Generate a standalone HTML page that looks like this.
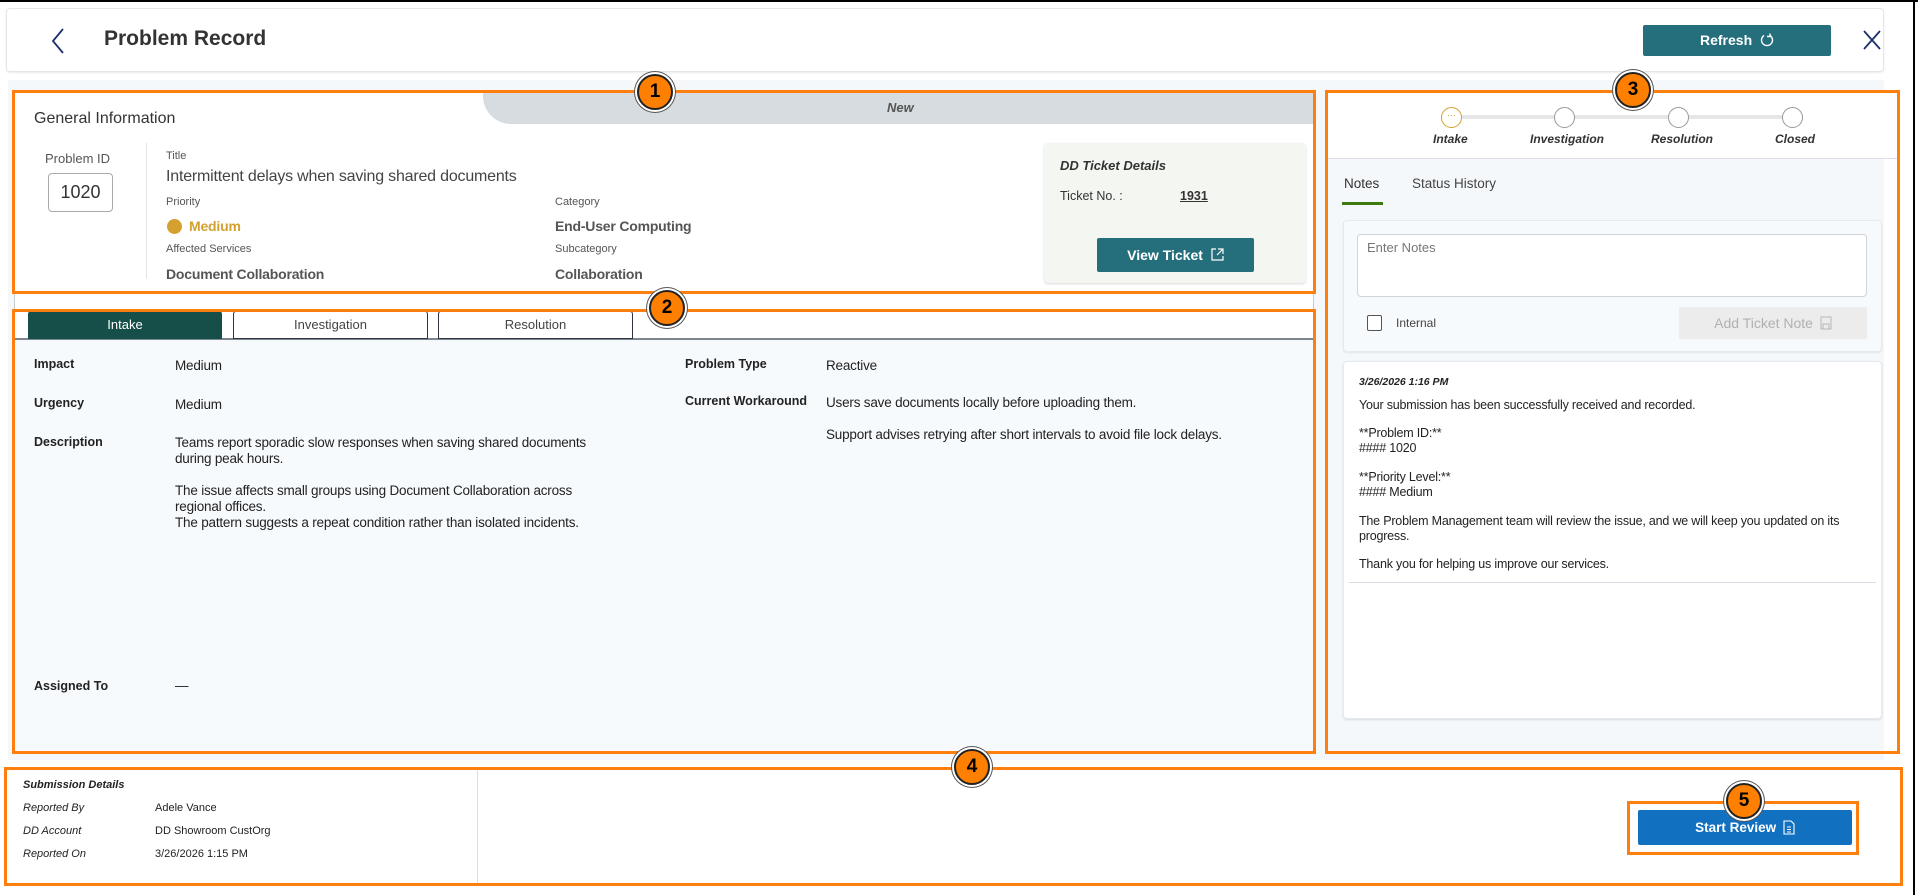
<!DOCTYPE html>
<html><head><meta charset="utf-8"><style>
*{margin:0;padding:0;box-sizing:border-box}
body{width:1918px;height:895px;position:relative;overflow:hidden;background:#fff;font-family:"Liberation Sans",sans-serif;color:#222}
.a{position:absolute;white-space:nowrap}
.ob{position:absolute;border:3px solid #ff7f0e}
.badge{position:absolute;width:36px;height:36px;border-radius:50%;background:#ff7f00;border:2px solid #222;box-shadow:0 0 0 2px #fff,0 0 0 3px #555;font-weight:bold;font-size:19px;line-height:32px;text-align:center;color:#000;z-index:10}
.sm{font-size:11px;color:#555}
.val{font-size:14px;color:#555;font-weight:bold;letter-spacing:-0.2px}
.lab{font-size:12.5px;font-weight:bold;color:#222}
.txt{font-size:13.5px;color:#222;letter-spacing:-0.2px}
.nt{font-size:12.5px;color:#222;letter-spacing:-0.2px}
</style></head><body>
<div class="a" style="left:0;top:0;width:1918px;height:2px;background:#000"></div>
<div class="a" style="left:1913px;top:0;width:2px;height:895px;background:#000"></div>
<!-- header -->
<div class="a" style="left:6px;top:8px;width:1878px;height:64px;border:1px solid #e6e6e6;border-radius:4px;box-shadow:0 1px 2px rgba(0,0,0,.08);background:#fff"></div>
<svg class="a" style="left:50px;top:27px" width="16" height="28"><path d="M13 2 L3 14 L13 26" stroke="#1f2f6b" stroke-width="1.8" fill="none"/></svg>
<div class="a" style="left:104px;top:27px;font-size:21px;font-weight:bold;color:#333">Problem Record</div>
<div class="a" style="left:1643px;top:25px;width:188px;height:31px;background:#256f7d;border-radius:2px;color:#fff;font-weight:bold;font-size:14px;text-align:center;line-height:31px">Refresh <svg width="14" height="14" style="vertical-align:-2px;margin-left:4px"><path d="M10 2.5 A5.5 5.5 0 1 1 4 2.5" stroke="#fff" stroke-width="1.4" fill="none"/><path d="M10 0.5 V3.5 H7" stroke="#fff" stroke-width="1.4" fill="none"/></svg></div>
<svg class="a" style="left:1862px;top:29px" width="20" height="22"><path d="M2 2 L18 20 M18 2 L2 20" stroke="#1f2f6b" stroke-width="1.8"/></svg>
<!-- main bg -->
<div class="a" style="left:8px;top:80px;width:1876px;height:680px;background:#f5f8fb"></div>
<!-- box1 -->
<div class="a" style="left:14px;top:92px;width:1300px;height:199px;background:#fff"></div>
<div class="a" style="left:483px;top:92px;width:831px;height:32px;background:#d6dcdf;border-bottom-left-radius:28px"></div>
<div class="a" style="left:887px;top:100px;font-size:13px;font-style:italic;font-weight:bold;color:#555">New</div>
<div class="a" style="left:34px;top:110px;font-size:16px;color:#333">General Information</div>
<div class="a" style="left:45px;top:151px;font-size:13px;color:#555">Problem ID</div>
<div class="a" style="left:48px;top:173px;width:65px;height:39px;border:1px solid #aaa;border-radius:4px;font-size:18px;text-align:center;line-height:37px;color:#333">1020</div>
<div class="a" style="left:146px;top:143px;width:1px;height:136px;background:#e3e3e3"></div>
<div class="a sm" style="left:166px;top:150px">Title</div>
<div class="a" style="left:166px;top:168px;font-size:16px;color:#444;letter-spacing:-0.2px">Intermittent delays when saving shared documents</div>
<div class="a sm" style="left:166px;top:196px">Priority</div>
<div class="a" style="left:167px;top:219px;width:15px;height:15px;border-radius:50%;background:#d4a030"></div>
<div class="a val" style="left:189px;top:218px;color:#d4a030">Medium</div>
<div class="a sm" style="left:166px;top:243px">Affected Services</div>
<div class="a val" style="left:166px;top:266px">Document Collaboration</div>
<div class="a sm" style="left:555px;top:196px">Category</div>
<div class="a val" style="left:555px;top:218px">End-User Computing</div>
<div class="a sm" style="left:555px;top:243px">Subcategory</div>
<div class="a val" style="left:555px;top:266px">Collaboration</div>
<div class="a" style="left:1044px;top:143px;width:262px;height:140px;background:#f3f6f1;border-radius:4px;box-shadow:0 1px 2px rgba(0,0,0,.15)"></div>
<div class="a" style="left:1060px;top:158px;font-size:13px;font-style:italic;font-weight:bold;color:#333">DD Ticket Details</div>
<div class="a" style="left:1060px;top:189px;font-size:12.5px;color:#333">Ticket No. :</div>
<div class="a" style="left:1180px;top:189px;font-size:12.5px;font-weight:bold;text-decoration:underline;color:#333">1931</div>
<div class="a" style="left:1097px;top:238px;width:157px;height:34px;background:#256f7d;border-radius:2px;color:#fff;font-weight:bold;font-size:14px;text-align:center;line-height:34px">View Ticket <svg width="13" height="13" style="vertical-align:-1px;margin-left:4px"><path d="M5 1H1V12H12V8 M7 1H12V6 M12 1L6 7" stroke="#fff" stroke-width="1.2" fill="none"/></svg></div>
<div class="ob" style="left:12px;top:90px;width:1304px;height:204px"></div>
<div class="a" style="left:14px;top:294px;width:1300px;height:15px;background:#fff;border-left:1px solid #ccc;border-right:1px solid #ccc"></div>
<!-- box2 -->
<div class="a" style="left:14px;top:311px;width:1300px;height:29px;background:#fff;border-bottom:2px solid #7c8790"></div>
<div class="a" style="left:28px;top:311px;width:194px;height:28px;background:#164e4a;border-radius:3px 3px 0 0;color:#fff;font-size:13px;text-align:center;line-height:28px">Intake</div>
<div class="a" style="left:233px;top:311px;width:195px;height:28px;border:1.5px solid #334;border-radius:3px 3px 0 0;color:#444;font-size:13px;text-align:center;line-height:26px">Investigation</div>
<div class="a" style="left:438px;top:311px;width:195px;height:28px;border:1.5px solid #334;border-radius:3px 3px 0 0;color:#444;font-size:13px;text-align:center;line-height:26px">Resolution</div>
<div class="a" style="left:14px;top:341px;width:1300px;height:411px;background:#f7fafd"></div>
<div class="a lab" style="left:34px;top:357px">Impact</div>
<div class="a txt" style="left:175px;top:358px">Medium</div>
<div class="a lab" style="left:34px;top:396px">Urgency</div>
<div class="a txt" style="left:175px;top:397px">Medium</div>
<div class="a lab" style="left:34px;top:435px">Description</div>
<div class="a txt" style="left:175px;top:435px;line-height:16px;white-space:normal;width:440px">Teams report sporadic slow responses when saving shared documents during peak hours.<br><br>The issue affects small groups using Document Collaboration across regional offices.<br>The pattern suggests a repeat condition rather than isolated incidents.</div>
<div class="a lab" style="left:685px;top:357px">Problem Type</div>
<div class="a txt" style="left:826px;top:358px">Reactive</div>
<div class="a lab" style="left:685px;top:394px">Current Workaround</div>
<div class="a txt" style="left:826px;top:395px">Users save documents locally before uploading them.</div>
<div class="a txt" style="left:826px;top:427px">Support advises retrying after short intervals to avoid file lock delays.</div>
<div class="a lab" style="left:34px;top:679px">Assigned To</div>
<div class="a txt" style="left:175px;top:678px">—</div>
<div class="ob" style="left:12px;top:309px;width:1304px;height:445px"></div>
<!-- box3 -->
<div class="a" style="left:1328px;top:92px;width:570px;height:67px;background:#fff;border-bottom:1px solid #dde"></div>
<div class="a" style="left:1451px;top:115px;width:341px;height:4px;background:#e4e6e8"></div>
<div class="a" style="left:1441px;top:107px;width:21px;height:21px;border-radius:50%;border:1.5px solid #d4a030;background:#fff;color:#d4a030;font-size:9px;text-align:center;line-height:14px">···</div>
<div class="a" style="left:1554px;top:107px;width:21px;height:21px;border-radius:50%;border:1.5px solid #999;background:#fff"></div>
<div class="a" style="left:1668px;top:107px;width:21px;height:21px;border-radius:50%;border:1.5px solid #999;background:#fff"></div>
<div class="a" style="left:1782px;top:107px;width:21px;height:21px;border-radius:50%;border:1.5px solid #999;background:#fff"></div>
<div class="a" style="left:1433px;top:132px;font-size:12px;font-style:italic;font-weight:bold;color:#333">Intake</div>
<div class="a" style="left:1530px;top:132px;font-size:12px;font-style:italic;font-weight:bold;color:#333">Investigation</div>
<div class="a" style="left:1651px;top:132px;font-size:12px;font-style:italic;font-weight:bold;color:#333">Resolution</div>
<div class="a" style="left:1775px;top:132px;font-size:12px;font-style:italic;font-weight:bold;color:#333">Closed</div>
<div class="a" style="left:1344px;top:176px;font-size:13.5px;color:#333">Notes</div>
<div class="a" style="left:1342px;top:202px;width:41px;height:3px;background:#3f7a10"></div>
<div class="a" style="left:1412px;top:176px;font-size:13.5px;color:#444">Status History</div>
<div class="a" style="left:1343px;top:220px;width:539px;height:132px;background:#f7fafd;border:1px solid #e6e9ee;border-radius:4px;box-shadow:0 1px 2px rgba(0,0,0,.08)"></div>
<div class="a" style="left:1357px;top:234px;width:510px;height:63px;background:#fff;border:1.5px solid #cfd4da;border-radius:4px"></div>
<div class="a" style="left:1367px;top:240px;font-size:13px;color:#777">Enter Notes</div>
<div class="a" style="left:1367px;top:315px;width:15px;height:16px;border:1.5px solid #555;border-radius:2px;background:#fff"></div>
<div class="a" style="left:1396px;top:316px;font-size:12px;color:#444">Internal</div>
<div class="a" style="left:1679px;top:307px;width:188px;height:32px;background:#ececec;border-radius:2px;color:#b0b0b0;font-size:14px;text-align:center;line-height:32px">Add Ticket Note <svg width="12" height="14" style="vertical-align:-2px;margin-left:3px"><rect x="1" y="1" width="10" height="12" stroke="#b8b8b8" fill="none"/><rect x="3" y="8" width="6" height="5" stroke="#b8b8b8" fill="none"/></svg></div>
<div class="a" style="left:1343px;top:361px;width:539px;height:358px;background:#fff;border:1px solid #e6e9ee;border-radius:4px;box-shadow:0 1px 2px rgba(0,0,0,.12)"></div>
<div class="a" style="left:1359px;top:376px;font-size:10.5px;font-style:italic;font-weight:bold;color:#222">3/26/2026 1:16 PM</div>
<div class="a nt" style="left:1359px;top:398px">Your submission has been successfully received and recorded.</div>
<div class="a nt" style="left:1359px;top:426px;line-height:15px">**Problem ID:**<br>#### 1020</div>
<div class="a nt" style="left:1359px;top:470px;line-height:15px">**Priority Level:**<br>#### Medium</div>
<div class="a nt" style="left:1359px;top:514px;line-height:15px">The Problem Management team will review the issue, and we will keep you updated on its<br>progress.</div>
<div class="a nt" style="left:1359px;top:557px">Thank you for helping us improve our services.</div>
<div class="a" style="left:1349px;top:582px;width:527px;height:1px;background:#d8dde3"></div>
<div class="ob" style="left:1325px;top:90px;width:575px;height:664px"></div>
<!-- box4 -->
<div class="a" style="left:477px;top:770px;width:1px;height:113px;background:#ddd"></div>
<div class="a" style="left:23px;top:779px;font-size:11px;font-style:italic;font-weight:bold;color:#222">Submission Details</div>
<div class="a" style="left:23px;top:802px;font-size:11px;font-style:italic;color:#222">Reported By</div>
<div class="a" style="left:155px;top:802px;font-size:11px;color:#222">Adele Vance</div>
<div class="a" style="left:23px;top:825px;font-size:11px;font-style:italic;color:#222">DD Account</div>
<div class="a" style="left:155px;top:825px;font-size:11px;color:#222">DD Showroom CustOrg</div>
<div class="a" style="left:23px;top:848px;font-size:11px;font-style:italic;color:#222">Reported On</div>
<div class="a" style="left:155px;top:848px;font-size:11px;color:#222">3/26/2026 1:15 PM</div>
<div class="ob" style="left:4px;top:767px;width:1899px;height:119px"></div>
<div class="a" style="left:1638px;top:810px;width:214px;height:35px;background:#1170c0;border-radius:2px;color:#fff;font-weight:bold;font-size:13.5px;text-align:center;line-height:35px">Start Review <svg width="12" height="15" style="vertical-align:-3px;margin-left:3px"><path d="M1 1H8L11 4V14H1Z M4 7H8 M4 9.5H8 M4 12H8" stroke="#fff" stroke-width="1.1" fill="none"/></svg></div>
<div class="ob" style="left:1627px;top:801px;width:232px;height:54px"></div>
<!-- badges -->
<div class="badge" style="left:637px;top:74px">1</div>
<div class="badge" style="left:649px;top:290px">2</div>
<div class="badge" style="left:1615px;top:72px">3</div>
<div class="badge" style="left:954px;top:749px">4</div>
<div class="badge" style="left:1726px;top:783px">5</div>
</body></html>
